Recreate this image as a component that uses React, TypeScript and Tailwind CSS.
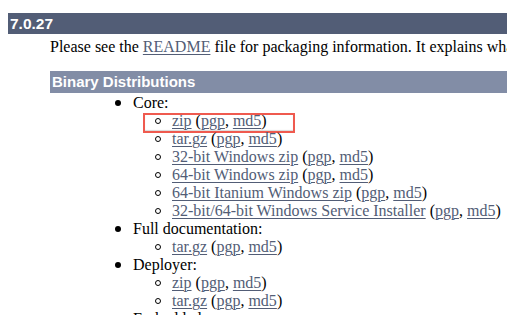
const linkCls = "text-[#525D76] underline decoration-1 underline-offset-2";

function Sub({ name, boxed }: { name: string; boxed?: boolean }) {
  return (
    <li className="relative flex h-[18px] items-center">
      <span className="ml-[12px] mr-[11px] inline-block h-[6px] w-[6px] rounded-full border-[1.5px] border-black" />
      <span className="whitespace-nowrap">
        <a href="#" className={linkCls}>{name}</a> (<a href="#" className={linkCls}>pgp</a>, <a href="#" className={linkCls}>md5</a>)
      </span>
      {boxed && (
        <div className="absolute left-0 top-[1px] h-[20px] w-[152px] border-2 border-[#ef5a4f] shadow-[inset_0_-1px_1px_rgba(0,0,0,0.15)]" />
      )}
    </li>
  );
}

function Top({ label, items }: { label: string; items: { name: string; boxed?: boolean }[] }) {
  return (
    <li>
      <div className="flex h-[18px] items-center">
        <span className="ml-[115px] mr-[12px] inline-block h-[6px] w-[6px] rounded-full bg-black" />
        <span>{label}</span>
      </div>
      <ul className="ml-[143px]">
        {items.map((it) => (
          <Sub key={it.name} name={it.name} boxed={it.boxed} />
        ))}
      </ul>
    </li>
  );
}

export default function App() {
  return (
    <div className="h-[315px] w-[507px] overflow-hidden bg-white pt-[13px] text-[16px] leading-[18px] text-black" style={{ fontFamily: '"Liberation Serif", "Times New Roman", serif' }}>
      <h3 className="ml-[8px] flex h-[21px] items-center bg-[#525D76] pl-[2px] text-[15.5px] font-bold text-white" style={{ fontFamily: '"Liberation Sans", Arial, sans-serif' }}>
        7.0.27
      </h3>
      <p className="ml-[50px] mt-[4px] whitespace-nowrap">
        Please see the <a href="#" className={linkCls}>README</a> file for packaging information. It explains what every distribution contains.
      </p>
      <h4 className="ml-[50px] mt-[15px] flex h-[22px] items-center bg-[#828DA6] pl-[2px] text-[15px] font-bold text-white" style={{ fontFamily: '"Liberation Sans", Arial, sans-serif' }}>
        Binary Distributions
      </h4>
      <ul className="mt-[1px]">
        <Top
          label="Core:"
          items={[
            { name: "zip", boxed: true },
            { name: "tar.gz" },
            { name: "32-bit Windows zip" },
            { name: "64-bit Windows zip" },
            { name: "64-bit Itanium Windows zip" },
            { name: "32-bit/64-bit Windows Service Installer" },
          ]}
        />
        <Top label="Full documentation:" items={[{ name: "tar.gz" }]} />
        <Top label="Deployer:" items={[{ name: "zip" }, { name: "tar.gz" }]} />
        <Top label="Embedded:" items={[{ name: "tar.gz" }]} />
      </ul>
    </div>
  );
}
